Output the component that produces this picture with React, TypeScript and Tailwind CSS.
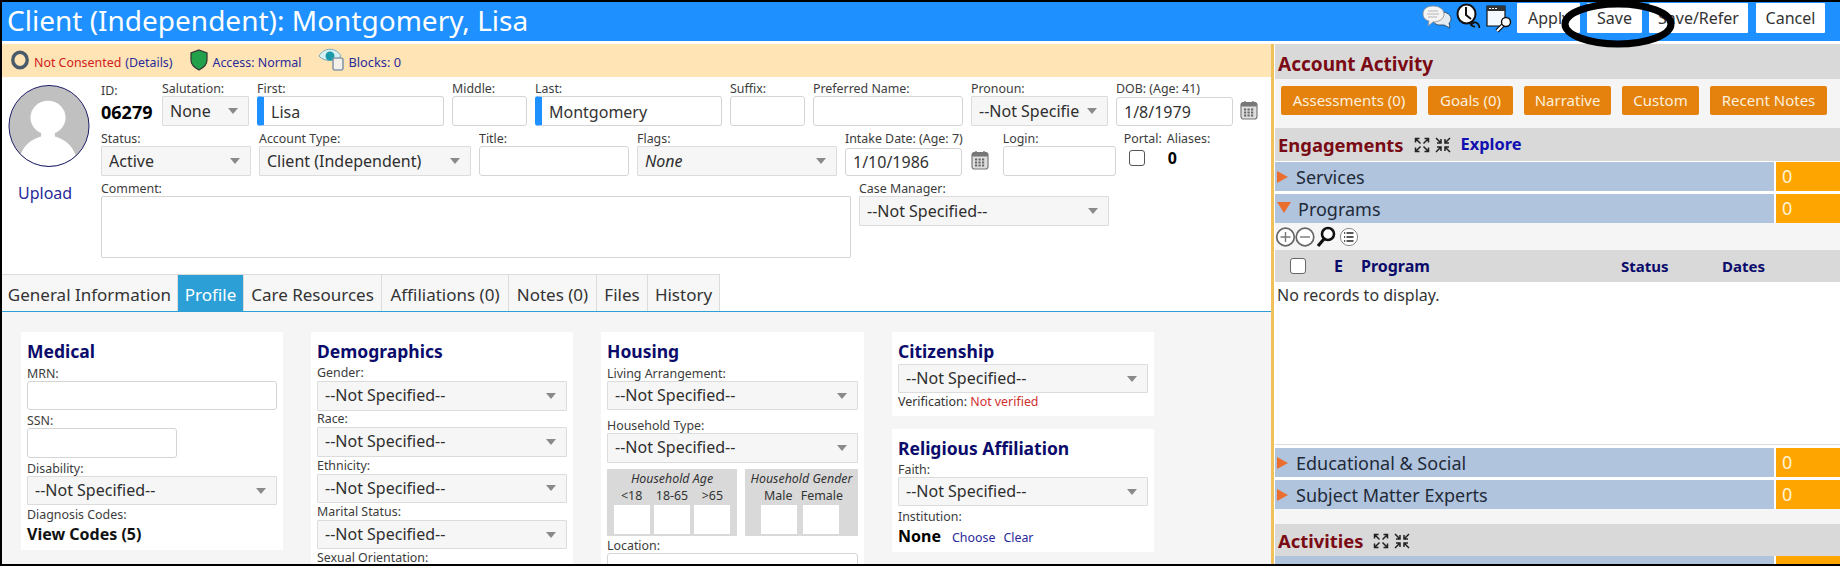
import React from "react";

const font = "font-['Noto_Sans','Open_Sans',sans-serif]";

function Caret() {
  return <span className="absolute right-[10px] top-1/2 -mt-[3px] h-0 w-0 border-x-[5px] border-t-[6px] border-x-transparent border-t-[#8a8a8a]" />;
}

function Sel({ value, w = "w-full", italic = false, h = "h-[30px]", lh = "leading-[27px]" }: { value: string; w?: string; italic?: boolean; h?: string; lh?: string }) {
  return (
    <div className={`relative ${w} ${h} ${lh} shrink-0 rounded-[1px] border border-[#dcdcdc] bg-[#f6f6f6] pl-[7px] pr-[27px] text-[16px] text-[#2e2e2e] ${italic ? "italic" : ""}`}>
      <div className="overflow-hidden whitespace-nowrap">{value}</div>
      <Caret />
    </div>
  );
}

function Inp({ value = "", w = "w-full", accent = false, h = "h-[30px] leading-[30px]" }: { value?: string; w?: string; accent?: boolean; h?: string }) {
  return (
    <div className={`relative ${w} ${h} shrink-0 overflow-hidden rounded-[3px] border border-[#d4d4d4] bg-white pl-[7px] text-[16px] text-[#333] ${accent ? "border-l-[7px] border-l-[#1e90ff] pl-[6px]" : ""}`}>
      {value}
    </div>
  );
}

function Lab({ children, className = "" }: { children: React.ReactNode; className?: string }) {
  return <div className={`h-[15px] whitespace-nowrap text-[12.4px] leading-[15px] text-[#3c3c3c] ${className}`}>{children}</div>;
}

function Cal() {
  return (
    <svg width="18" height="20" viewBox="0 0 18 20" className="shrink-0">
      <rect x="1" y="2.5" width="16" height="16.5" rx="2.5" fill="#dedede" stroke="#777" strokeWidth="1.2" />
      <rect x="1" y="2.5" width="16" height="4" rx="1.5" fill="#777" />
      <path d="M5 1v3M13 1v3" stroke="#777" strokeWidth="1.4" />
      {[4, 7.5, 11].map((x) =>
        [8.5, 11.5, 14.5].map((y) => <rect key={`${x}-${y}`} x={x} y={y} width="2.2" height="2" fill="#666" />)
      )}
    </svg>
  );
}

function ExpandIcons() {
  return (
    <span className="flex items-center gap-[5px]">
      <svg width="16" height="16" viewBox="0 0 16 16" fill="none" stroke="#222" strokeWidth="1.5">
        <path d="M6.5 6.5 1.5 1.5M1.5 5.5v-4h4M9.5 6.5l5-5M10.5 1.5h4v4M6.5 9.5l-5 5M1.5 10.5v4h4M9.5 9.5l5 5M14.5 10.5v4h-4" />
      </svg>
      <svg width="16" height="16" viewBox="0 0 16 16" fill="none" stroke="#222" strokeWidth="1.5">
        <path d="M1 1l5 5M2 6h4V2M15 1l-5 5M10 2v4h4M1 15l5-5M2 10h4v4M15 15l-5-5M10 14v-4h4" />
      </svg>
    </span>
  );
}

function Row({ name, open = false }: { name: string; open?: boolean }) {
  return (
    <div className="flex h-[29px] gap-[2px]">
      <div className="flex flex-1 items-center bg-[#b0c4de] pl-[2px] text-[18px] text-[#1f2a38]">
        {open ? (
          <span className="mr-[7px] mt-[-3px] h-0 w-0 border-x-[7px] border-t-[11px] border-x-transparent border-t-[#ea6f2f]" />
        ) : (
          <span className="mr-[8px] h-0 w-0 border-y-[6.5px] border-l-[11px] border-y-transparent border-l-[#ea6f2f]" />
        )}
        <span className="pt-[1px]">{name}</span>
      </div>
      <div className="flex w-[64px] items-center bg-[#ffa500] pl-[6px] text-[18px] text-[#fff3d6]">0</div>
    </div>
  );
}

function Card({ title, children, className = "", w = "w-[262px]" }: { title?: string; children: React.ReactNode; className?: string; w?: string }) {
  return (
    <div className={`${w} shrink-0 bg-white px-[6px] ${className}`}>
      {title && <div className="h-[27px] whitespace-nowrap pt-[9px] text-[17.5px] font-bold leading-[21px] text-[#0b0b6b]">{title}</div>}
      {children}
    </div>
  );
}

function LF({ label, value }: { label: string; value: string }) {
  return (
    <div className="mb-[0.83px]">
      <Lab className="h-[16px]">{label}</Lab>
      <Sel value={value} h="h-[29.5px]" />
    </div>
  );
}

const NS = "--Not Specified--";
const formLh = "leading-[29px]";

export default function App() {
  return (
    <div className={`relative flex h-[566px] w-[1840px] flex-col overflow-hidden border-y-2 border-l-2 border-black bg-white ${font}`}>
      {/* title bar */}
      <div className="flex h-[39px] shrink-0 items-start justify-between bg-[#1e90ff] pl-[5px] pr-[15px]">
        <div className="whitespace-nowrap text-[28px] leading-[37px] text-white">Client (Independent): Montgomery, Lisa</div>
        <div className="flex items-start">
          <div className="mr-[5px] mt-[1px] flex items-start gap-[4px]">
            <svg width="30" height="26" viewBox="0 0 30 26" className="mt-[2px]">
              <path d="M20 7c5 0 9 3 9 7 0 2-1 3-2 4l1 5-6-3h-4c-4 0-7-2-7-6s4-7 9-7z" fill="#e4ecf2" stroke="#2a3a4a" strokeWidth="0.8" />
              <path d="M11 1c6 0 11 3 11 8s-5 8-11 8l-5 4 1-5C3 15 1 12 1 9c0-5 4-8 10-8z" fill="#f4f4f4" stroke="#8a8a8a" strokeWidth="0.8" />
              <path d="M6 6h10M5 9h12M6 12h9" stroke="#b5b5b5" strokeWidth="1" />
            </svg>
            <svg width="26" height="30" viewBox="0 0 26 30">
              <ellipse cx="10.5" cy="11" rx="9" ry="9.5" fill="#fff" stroke="#111" strokeWidth="2" />
              <path d="M10 4v8l5 4" fill="none" stroke="#111" strokeWidth="2" />
              <path d="M14.5 22c2-4 8-4 9 3M14.5 22l4-3M14.5 22l4.5 2" fill="none" stroke="#111" strokeWidth="1.7" />
            </svg>
            <svg width="26" height="28" viewBox="0 0 26 28" className="mt-[2px]">
              <rect x="1" y="1" width="18" height="20" fill="#fff" opacity="0.95" />
              <path d="M1 1h18v20H1z" fill="none" stroke="#111" strokeWidth="1.2" />
              <rect x="1" y="1" width="18" height="5" fill="#333" />
              <path d="M3 3.5h2M6 3.5h2M9 3.5h2" stroke="#fff" strokeWidth="1" />
              <path d="M18 19l-7 7" stroke="#111" strokeWidth="4.2" />
              <path d="M18 19l-7 7" stroke="#fff" strokeWidth="2" />
              <circle cx="20" cy="17" r="4.5" fill="#fff" stroke="#111" strokeWidth="1.4" />
            </svg>
          </div>
          <div className="mt-[1px] flex h-[30px] w-[63px] items-center rounded-[1px] bg-white pl-[11px] text-[16px] text-[#333]">Apply</div>
          <div className="ml-[7px] mt-[1px] flex h-[30px] w-[55px] items-center justify-center rounded-[1px] bg-white text-[16px] text-[#333]">Save</div>
          <div className="ml-[7px] mt-[1px] flex h-[30px] w-[99px] items-center justify-center rounded-[1px] bg-white text-[16px] text-[#333]">Save/Refer</div>
          <div className="ml-[8px] mt-[1px] flex h-[30px] w-[69px] items-center justify-center rounded-[1px] bg-white text-[16px] text-[#333]">Cancel</div>
        </div>
      </div>

      <div className="mt-[3px] flex min-h-0 flex-1">
        {/* left */}
        <div className="flex w-[1269px] shrink-0 flex-col">
          <div className="flex h-[33px] shrink-0 items-center whitespace-nowrap bg-[#ffe4b5] pl-[9px] text-[12.4px]">
            <svg width="18" height="20" viewBox="0 0 18 20" className="mb-[2px]"><ellipse cx="9" cy="10" rx="7.2" ry="7.8" fill="none" stroke="#4a5a6a" strokeWidth="3.4" /></svg>
            <span className="ml-[5px] mt-[5px] text-[#d02020]">Not Consented</span>
            <span className="ml-[4px] mt-[5px] text-[#2a2a9a]">(Details)</span>
            <svg width="18" height="22" viewBox="0 0 18 22" className="mb-[2px] ml-[17px]"><path d="M9 1l8 3v7c0 5-4 8-8 10-4-2-8-5-8-10V4z" fill="#22a04a" stroke="#333" strokeWidth="1.2" /></svg>
            <span className="ml-[5px] mt-[5px] text-[#2a2a9a]">Access: Normal</span>
            <svg width="27" height="24" viewBox="0 0 27 24" className="mb-[4px] ml-[17px]">
              <path d="M1 9c5-9 17-9 22 0-5 6-17 6-22 0z" fill="#d8f0f4" stroke="#7ab" strokeWidth="1" />
              <circle cx="12" cy="9" r="4.5" fill="#1a9aa8" />
              <rect x="15" y="11" width="10" height="12" rx="2" fill="#f4f0ea" stroke="#8899aa" strokeWidth="1.6" />
            </svg>
            <span className="ml-[3px] mt-[5px] text-[12.8px] text-[#2a2a9a]">Blocks: 0</span>
          </div>

          {/* form */}
          <div className="flex h-[197px] shrink-0">
            <div className="w-[99px] shrink-0 pl-[6px] pt-[7px]">
              <svg width="82" height="84" viewBox="0 0 84 85" preserveAspectRatio="none">
                <defs><clipPath id="av"><circle cx="42" cy="42.5" r="40.5" /></clipPath></defs>
                <circle cx="42" cy="42.5" r="41" fill="#c0c0c0" />
                <g clipPath="url(#av)" fill="#fff">
                  <ellipse cx="41" cy="34" rx="18" ry="17" />
                  <path d="M34 45h14v8c10 3 22 9 24 32H10c2-23 14-29 24-32z" />
                </g>
                <circle cx="42" cy="42.5" r="41" fill="none" stroke="#1a1a66" strokeWidth="1" />
              </svg>
              <div className="ml-[10px] mt-[14px] text-[16px] leading-[22px] text-[#2a2a9a]">Upload</div>
            </div>
            <div className="min-w-0 flex-1 pt-[4px]">
              <div className="flex gap-[8px]">
                <div className="w-[53px] shrink-0 pt-[2px]">
                  <Lab>ID:</Lab>
                  <div className="mt-[2px] text-[18px] font-bold leading-[24px] text-black">06279</div>
                </div>
                <div><Lab>Salutation:</Lab><Sel value="None" w="w-[87px]" lh={formLh} /></div>
                <div><Lab>First:</Lab><Inp value="Lisa" w="w-[187px]" accent /></div>
                <div><Lab>Middle:</Lab><Inp w="w-[75px]" /></div>
                <div><Lab>Last:</Lab><Inp value="Montgomery" w="w-[187px]" accent /></div>
                <div><Lab>Suffix:</Lab><Inp w="w-[75px]" /></div>
                <div><Lab>Preferred Name:</Lab><Inp w="w-[150px]" /></div>
                <div><Lab>Pronoun:</Lab><Sel value="--Not Specified--" w="w-[137px]" lh={formLh} /></div>
                <div className="flex items-start gap-[7px]">
                  <div><Lab className="h-[16px]">DOB: (Age: 41)</Lab><Inp value="1/8/1979" w="w-[117px]" h="h-[29px] leading-[29px]" /></div>
                  <div className="mt-[19px]"><Cal /></div>
                </div>
              </div>
              <div className="mt-[5px] flex gap-[8px]">
                <div><Lab>Status:</Lab><Sel value="Active" w="w-[150px]" lh={formLh} /></div>
                <div><Lab>Account Type:</Lab><Sel value="Client (Independent)" w="w-[212px]" lh={formLh} /></div>
                <div><Lab>Title:</Lab><Inp w="w-[150px]" /></div>
                <div><Lab>Flags:</Lab><Sel value="None" w="w-[200px]" italic lh={formLh} /></div>
                <div className="flex items-start gap-[8px]">
                  <div><Lab className="h-[17px]">Intake Date: (Age: 7)</Lab><Inp value="1/10/1986" w="w-[117px]" h="h-[28px] leading-[27px]" /></div>
                  <div className="mt-[19px]"><Cal /></div>
                </div>
                <div className="ml-[6px]"><Lab>Login:</Lab><Inp w="w-[113px]" /></div>
                <div>
                  <Lab>Portal:</Lab>
                  <div className="ml-[5px] mt-[4px] h-[16px] w-[16px] rounded-[3px] border border-[#555] bg-white" />
                </div>
                <div className="-ml-[3px]">
                  <Lab>Aliases:</Lab>
                  <div className="ml-[1px] mt-[2px] text-[16px] font-bold leading-[20px] text-black">0</div>
                </div>
              </div>
              <div className="mt-[5px] flex gap-[8px]">
                <div><Lab>Comment:</Lab><div className="h-[62px] w-[750px] rounded-[2px] border border-[#d4d4d4] bg-white" /></div>
                <div><Lab>Case Manager:</Lab><Sel value={NS} w="w-[250px]" lh={formLh} /></div>
              </div>
            </div>
          </div>

          {/* tabs */}
          <div className="flex h-[38px] shrink-0 border-b border-[#2b9fd6] text-[17px] text-[#333]">
            {[
              ["General Information", "w-[176px]", false],
              ["Profile", "w-[66px]", true],
              ["Care Resources", "w-[138px]", false],
              ["Affiliations (0)", "w-[127px]", false],
              ["Notes (0)", "w-[88px]", false],
              ["Files", "w-[51px]", false],
              ["History", "w-[72px]", false],
            ].map(([t, w, on]) => (
              <div key={t as string} className={`${w} flex items-center justify-center whitespace-nowrap border-t border-r border-[#dcdcdc] pt-[3px] ${on ? "bg-[#2b9fd6] text-white" : "bg-[#f7f7f7]"}`}>{t}</div>
            ))}
          </div>

          {/* profile */}
          <div className="flex min-h-0 flex-1 gap-[28px] overflow-hidden bg-[#f5f5f5] pl-[19px] pt-[20px]">
            <Card title="Medical" className="h-[218px]">
              <Lab className="mt-[7px]">MRN:</Lab>
              <Inp h="h-[29px]" />
              <Lab className="mt-[3px]">SSN:</Lab>
              <Inp w="w-[150px]" />
              <Lab className="mt-[3px]">Disability:</Lab>
              <Sel value={NS} h="h-[29px]" />
              <Lab className="mt-[2px]">Diagnosis Codes:</Lab>
              <div className="text-[16px] font-bold leading-[24px] text-[#111]">View Codes (5)</div>
            </Card>
            <Card title="Demographics" className="h-[240px]">
              <div className="pt-[6px]">
                <LF label="Gender:" value={NS} />
                <LF label="Race:" value={NS} />
                <LF label="Ethnicity:" value={NS} />
                <LF label="Marital Status:" value={NS} />
                <Lab className="mt-[1px]">Sexual Orientation:</Lab>
              </div>
            </Card>
            <Card title="Housing" className="h-[240px]" w="w-[263px]">
              <Lab className="mt-[7px]">Living Arrangement:</Lab>
              <Sel value={NS} h="h-[29px]" />
              <Lab className="mt-[8px]">Household Type:</Lab>
              <Sel value={NS} />
              <div className="mt-[6px] flex gap-[8px]">
                <div className="h-[67px] w-[130px] bg-[#d9d9d9] px-[7px] text-center text-[12.4px] text-[#333]">
                  <div className="pt-[2px] italic leading-[16px]">Household Age</div>
                  <div className="flex h-[18px] justify-between px-[7px] leading-[18px]"><span>&lt;18</span><span>18-65</span><span>&gt;65</span></div>
                  <div className="flex justify-between">
                    <span className="h-[29px] w-[36px] bg-white" /><span className="h-[29px] w-[36px] bg-white" /><span className="h-[29px] w-[36px] bg-white" />
                  </div>
                </div>
                <div className="h-[67px] w-[113px] bg-[#d9d9d9] text-center text-[12.4px] text-[#333]">
                  <div className="whitespace-nowrap pt-[2px] italic leading-[16px]">Household Gender</div>
                  <div className="flex h-[18px] justify-between pl-[19px] pr-[15px] leading-[18px]"><span>Male</span><span>Female</span></div>
                  <div className="flex justify-between pl-[16px] pr-[19px]">
                    <span className="h-[29px] w-[36px] bg-white" /><span className="h-[29px] w-[36px] bg-white" />
                  </div>
                </div>
              </div>
              <Lab className="mt-[2px]">Location:</Lab>
              <Inp />
            </Card>
            <div className="flex flex-col gap-[13px]">
              <Card title="Citizenship" className="h-[84px]">
                <div className="pt-[5px]"><Sel value={NS} h="h-[29px]" /></div>
                <div className="mt-[1px] text-[12.4px] leading-[16px] text-[#333]">Verification: <span className="text-[#d03030]">Not verified</span></div>
              </Card>
              <Card title="Religious Affiliation" className="h-[123px]">
                <Lab className="mt-[6px]">Faith:</Lab>
                <Sel value={NS} h="h-[29px]" />
                <Lab className="mt-[3px]">Institution:</Lab>
                <div className="flex items-baseline gap-[11px]">
                  <span className="text-[16px] font-bold leading-[24px] text-black">None</span>
                  <span className="text-[12.4px] text-[#2a2a9a]">Choose</span>
                  <span className="-ml-[3px] text-[12.4px] text-[#2a2a9a]">Clear</span>
                </div>
              </Card>
            </div>
          </div>
        </div>

        {/* right */}
        <div className="flex min-w-0 flex-1 flex-col border-l-[3px] border-l-[#f0c05a] pl-[1px]">
          <div className="flex h-[35px] shrink-0 items-center bg-[#d9d9d9] pl-[3px] pt-[5px] text-[19px] font-bold text-[#7a0a14]">Account Activity</div>
          <div className="flex h-[49px] shrink-0 items-start gap-[11px] bg-[#f5f5f5] pl-[6px] pt-[7px]">
            {[
              ["Assessments (0)", "w-[136px]"],
              ["Goals (0)", "w-[85px]"],
              ["Narrative", "w-[87px]"],
              ["Custom", "w-[77px]"],
              ["Recent Notes", "w-[117px]"],
            ].map(([t, w]) => (
              <div key={t} className={`${w} flex h-[29px] items-center justify-center whitespace-nowrap rounded-[2px] bg-[#e5820e] text-[15px] text-[#fdf0dc]`}>{t}</div>
            ))}
          </div>
          <div className="flex h-[33px] shrink-0 items-center bg-[#d9d9d9] pl-[3px]">
            <span className="text-[18.4px] font-bold text-[#7a0a14]">Engagements</span>
            <span className="ml-[10px]"><ExpandIcons /></span>
            <span className="ml-[10px] text-[16.4px] font-bold text-[#1010b0]">Explore</span>
          </div>
          <div className="mt-[1px] flex flex-col gap-[3px]">
            <Row name="Services" />
            <Row name="Programs" open />
          </div>
          <div className="flex h-[27px] shrink-0 items-center bg-[#f5f5f5]">
            <svg width="86" height="22" viewBox="0 0 86 22">
              <circle cx="10.5" cy="11" r="8.8" fill="#fff" stroke="#666" strokeWidth="1.7" />
              <path d="M5.5 11h10M10.5 6v10" stroke="#777" strokeWidth="1.4" />
              <circle cx="30" cy="11" r="8.8" fill="#fff" stroke="#666" strokeWidth="1.7" />
              <path d="M25 11h10" stroke="#777" strokeWidth="1.4" />
              <circle cx="53" cy="8" r="6" fill="#fff" stroke="#111" strokeWidth="2.6" />
              <path d="M49 13l-6 7" stroke="#111" strokeWidth="3.2" />
              <circle cx="74" cy="11" r="8.6" fill="#fff" stroke="#888" strokeWidth="1" />
              <path d="M71.5 7h7M71.5 11h7M71.5 15h7M69 7h1.2M69 11h1.2M69 15h1.2" stroke="#222" strokeWidth="1.7" />
            </svg>
          </div>
          <div className="flex h-[32px] shrink-0 items-center bg-[#d9d9d9] text-[15px] font-bold text-[#0b0b6b]">
            <span className="ml-[15px] h-[16px] w-[16px] rounded-[3px] border border-[#666] bg-white" />
            <span className="ml-[28px] text-[16px]">E</span>
            <span className="ml-[18px] w-[260px] text-[16px]">Program</span>
            <span className="w-[101px]">Status</span>
            <span>Dates</span>
          </div>
          <div className="h-[163px] shrink-0 border-b border-[#dcdcdc] bg-white pl-[2px] pt-[2px] text-[16px] leading-[22px] text-[#333]">No records to display.</div>
          <div className="mt-[3px] flex flex-col gap-[3px]">
            <Row name="Educational & Social" />
            <Row name="Subject Matter Experts" />
          </div>
          <div className="h-[15px] shrink-0 bg-[#f5f5f5]" />
          <div className="flex h-[32px] shrink-0 items-center bg-[#d9d9d9] pl-[3px] pt-[1px]">
            <span className="text-[18.4px] font-bold text-[#7a0a14]">Activities</span>
            <span className="ml-[10px]"><ExpandIcons /></span>
          </div>
          <div className="flex flex-1 gap-[2px]">
            <div className="flex-1 bg-[#b0c4de]" />
            <div className="w-[64px] bg-[#ffa500]" />
          </div>
        </div>
      </div>

      {/* hand-drawn circle over Save */}
      <svg width="116" height="50" viewBox="0 0 116 50" className="absolute left-[1558px] -top-[2px]">
        <ellipse cx="58" cy="24" rx="53" ry="20" fill="none" stroke="#000" strokeWidth="7" />
      </svg>
    </div>
  );
}
